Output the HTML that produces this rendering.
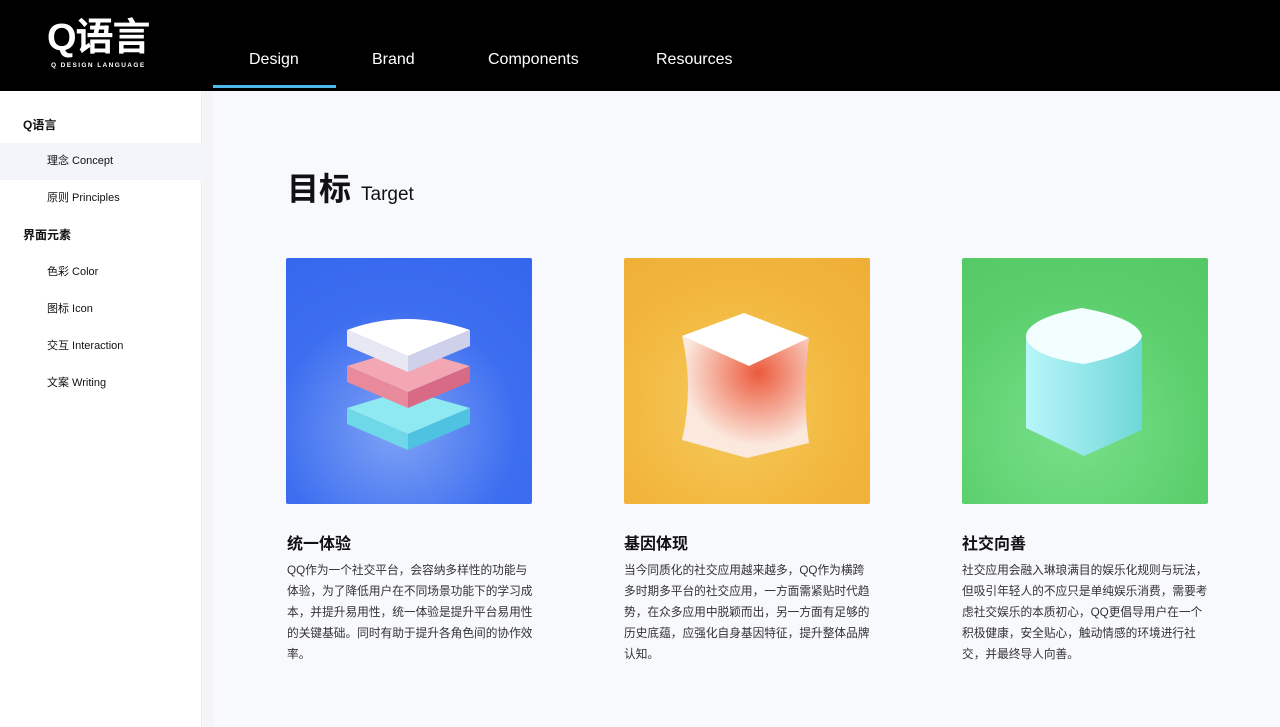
<!DOCTYPE html>
<html><head><meta charset="utf-8"><style>
*{margin:0;padding:0;box-sizing:border-box}
body{width:1280px;height:727px;overflow:hidden;font-family:"Liberation Sans","Noto Sans CJK SC",sans-serif;background:#f8f9fd;position:relative}
.top{position:absolute;left:0;top:0;width:1280px;height:91px;background:#000}
.logo{position:absolute;left:47px;top:18px;color:#fff;font-weight:bold;font-size:38px;line-height:40px;letter-spacing:-1px}
.logo small{position:absolute;left:4px;top:44px;font-size:6.5px;letter-spacing:1.4px;white-space:nowrap;line-height:8px}
.nav{position:absolute;top:51px;color:#fff;font-size:16px}
.ul{position:absolute;left:213px;top:85px;width:123px;height:3px;background:#4fb8ec}
.side{position:absolute;left:0;top:91px;width:202px;height:636px;background:#fff;border-right:1px solid #ececec}
.strip{position:absolute;left:203px;top:91px;width:10px;height:636px;background:#f5f5f7}
.it{position:absolute;left:0;width:202px;height:37px;line-height:37px;font-size:11px;color:#111}
.h{padding-left:23px;font-size:12px;font-weight:bold}
.s{padding-left:47px}
.act{background:#f3f5fb}
h1{position:absolute;left:287px;top:164px;font-size:32px;font-weight:bold;color:#111}
h1 span{font-size:19px;font-weight:normal;margin-left:10px}
.card{position:absolute;top:258px;width:246px;height:246px;border-radius:2px;overflow:hidden}
.t{position:absolute;top:530px;font-size:16px;font-weight:bold;color:#111}
.p{position:absolute;top:560px;font-size:11.7px;line-height:21px;color:#333;white-space:nowrap}
</style></head><body>
<div class="top">
<div class="logo">Q语言<small>Q DESIGN LANGUAGE</small></div>
<div class="nav" style="left:249px">Design</div>
<div class="nav" style="left:372px">Brand</div>
<div class="nav" style="left:488px">Components</div>
<div class="nav" style="left:656px">Resources</div>
<div class="ul"></div>
</div>
<div class="side">
<div class="it h" style="top:16px">Q语言</div>
<div class="it s act" style="top:52px">理念 Concept</div>
<div class="it s" style="top:89px">原则 Principles</div>
<div class="it h" style="top:126px">界面元素</div>
<div class="it s" style="top:163px">色彩 Color</div>
<div class="it s" style="top:200px">图标 Icon</div>
<div class="it s" style="top:237px">交互 Interaction</div>
<div class="it s" style="top:274px">文案 Writing</div>
</div>
<div class="strip"></div>
<h1>目标<span>Target</span></h1>

<div class="card" style="left:286px;background:radial-gradient(circle at 45% 70%,#7fa3f5,#3d6ef0 55%,#3466ee)">
<svg width="246" height="246">
<polygon points="61,150 120,132 184,150 122,176" fill="#8fe9f0"/><polygon points="61,150 122,176 122,192 61,166" fill="#6fd8e8"/><polygon points="122,176 184,150 184,166 122,192" fill="#4fc2e2"/>
<polygon points="61,108 120,90 184,108 122,134" fill="#f2a7b3"/><polygon points="61,108 122,134 122,150 61,124" fill="#e88a9c"/><polygon points="122,134 184,108 184,124 122,150" fill="#d96a85"/>
<path d="M61,72 Q120,50 184,72 L122,98 Z" fill="#fff"/><polygon points="61,72 122,98 122,114 61,88" fill="#e8e8f4"/><polygon points="122,98 184,72 184,88 122,114" fill="#cfd0ea"/>
</svg></div>

<div class="card" style="left:624px;background:radial-gradient(circle at 45% 60%,#f6cb5e,#f2b63c 60%,#efae35)">
<svg width="246" height="246">
<defs><radialGradient id="r" cx="0.6" cy="0.3" r="0.6"><stop offset="0" stop-color="#ec5a3c"/><stop offset="1" stop-color="#fbe9de"/></radialGradient></defs>
<polygon points="58,78 120,55 185,80 125,108" fill="#fff"/>
<path d="M58,78 L125,108 L185,80 Q178,140 185,185 L123,200 L58,182 Q70,130 58,78Z" fill="url(#r)"/>
</svg></div>

<div class="card" style="left:962px;background:radial-gradient(circle at 45% 70%,#78e08a,#5ccf6d 60%,#55c866)">
<svg width="246" height="246">
<defs><linearGradient id="g" x1="0" x2="1"><stop offset="0" stop-color="#b8f6fb"/><stop offset="1" stop-color="#6fd7d7"/></linearGradient></defs>
<path d="M64,78 Q64,65 100,58 L120,50 L180,78 L180,172 L122,198 L64,170 Z" fill="url(#g)"/>
<path d="M64,78 Q66,60 120,50 Q175,60 180,78 Q175,95 122,106 Q66,98 64,78Z" fill="#f2feff"/>
</svg></div>

<div class="t" style="left:287px">统一体验</div>
<div class="p" style="left:287px">QQ作为一个社交平台，会容纳多样性的功能与<br>体验，为了降低用户在不同场景功能下的学习成<br>本，并提升易用性，统一体验是提升平台易用性<br>的关键基础。同时有助于提升各角色间的协作效<br>率。</div>
<div class="t" style="left:624px">基因体现</div>
<div class="p" style="left:624px">当今同质化的社交应用越来越多，QQ作为横跨<br>多时期多平台的社交应用，一方面需紧贴时代趋<br>势，在众多应用中脱颖而出，另一方面有足够的<br>历史底蕴，应强化自身基因特征，提升整体品牌<br>认知。</div>
<div class="t" style="left:962px">社交向善</div>
<div class="p" style="left:962px">社交应用会融入琳琅满目的娱乐化规则与玩法，<br>但吸引年轻人的不应只是单纯娱乐消费，需要考<br>虑社交娱乐的本质初心，QQ更倡导用户在一个<br>积极健康，安全贴心，触动情感的环境进行社<br>交，并最终导人向善。</div>
</body></html>
